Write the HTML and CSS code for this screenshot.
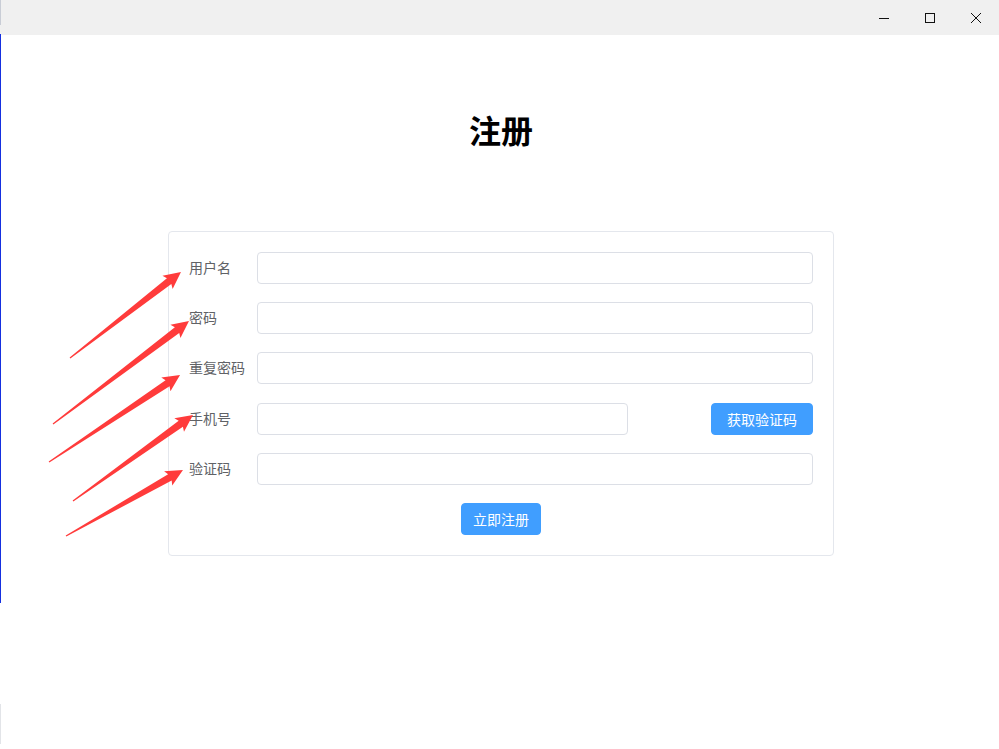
FILE: index.html
```html
<!DOCTYPE html>
<html lang="zh">
<head>
<meta charset="utf-8">
<title>注册</title>
<link rel="stylesheet" href="styles.css">
</head>
<body>
<div class="titlebar">
  <div class="ctrl">
    <svg width="12" height="12" viewBox="0 0 12 12"><path d="M1 6.5h10" stroke="#111" stroke-width="1"/></svg>
  </div>
  <div class="ctrl">
    <svg width="12" height="12" viewBox="0 0 12 12"><rect x="1.5" y="1.5" width="9" height="9" fill="none" stroke="#111" stroke-width="1"/></svg>
  </div>
  <div class="ctrl">
    <svg width="12" height="12" viewBox="0 0 12 12"><path d="M1 1L11 11M11 1L1 11" stroke="#111" stroke-width="1"/></svg>
  </div>
</div>
<div class="edge-top"></div>
<div class="edge-blue"></div>
<div class="edge-bottom"></div>

<main class="page">
  <h1 class="title">注册</h1>
  <div class="card">
    <div class="row">
      <label class="label">用户名</label>
      <div class="field"><div class="input"></div></div>
    </div>
    <div class="row">
      <label class="label">密码</label>
      <div class="field"><div class="input"></div></div>
    </div>
    <div class="row wide-gap">
      <label class="label">重复密码</label>
      <div class="field"><div class="input"></div></div>
    </div>
    <div class="row">
      <label class="label">手机号</label>
      <div class="field split">
        <div class="input phone"></div>
        <button class="btn code">获取验证码</button>
      </div>
    </div>
    <div class="row">
      <label class="label">验证码</label>
      <div class="field"><div class="input"></div></div>
    </div>
    <div class="row last center">
      <button class="btn submit">立即注册</button>
    </div>
  </div>
</main>

<svg class="arrows" width="999" height="749" viewBox="0 0 999 749">
  <g fill="#ff3b3b">
    <g transform="translate(70 358) rotate(-37.77)">
      <polygon points="0,-0.6 125.4,-3.6 123.4,-8.3 140.4,0 123.4,8.3 125.4,3.6 0,0.6"/>
    </g>
    <g transform="translate(53 424) rotate(-37.14)">
      <polygon points="0,-0.6 155.6,-3.6 153.6,-8.3 170.6,0 153.6,8.3 155.6,3.6 0,0.6"/>
    </g>
    <g transform="translate(49 462) rotate(-33.59)">
      <polygon points="0,-0.6 142.3,-3.6 140.3,-8.3 157.3,0 140.3,8.3 142.3,3.6 0,0.6"/>
    </g>
    <g transform="translate(73 501) rotate(-35.62)">
      <polygon points="0,-0.6 132.6,-3.6 130.6,-8.3 147.6,0 130.6,8.3 132.6,3.6 0,0.6"/>
    </g>
    <g transform="translate(66 536) rotate(-29.43)">
      <polygon points="0,-0.6 119.3,-3.6 117.3,-8.3 134.3,0 117.3,8.3 119.3,3.6 0,0.6"/>
    </g>
  </g>
</svg>
</body>
</html>
```

FILE: styles.css
```css
* { box-sizing: border-box; }

html, body {
  margin: 0;
  padding: 0;
  background: #ffffff;
  font-family: "Noto Sans CJK SC", "Liberation Sans", sans-serif;
  overflow: hidden;
}

body {
  width: 999px;
  height: 749px;
  position: relative;
}

.titlebar {
  height: 35px;
  background: #f0f0f0;
  display: flex;
  justify-content: flex-end;
}

.ctrl {
  width: 46px;
  height: 35px;
  display: flex;
  align-items: center;
  justify-content: center;
}

.edge-top {
  position: absolute;
  left: 0;
  top: 0;
  width: 1px;
  height: 25px;
  background: #c9cdd6;
}

.edge-blue {
  position: absolute;
  left: 0;
  top: 34px;
  width: 1px;
  height: 569px;
  background: #1530e0;
}

.edge-bottom {
  position: absolute;
  left: 0;
  top: 704px;
  width: 1px;
  height: 40px;
  background: #e2e4e8;
}

.page {
  padding: 70px 0 0 3px;
}

.title {
  margin: 0;
  text-align: center;
  font-size: 32px;
  line-height: 48px;
  font-weight: 700;
  color: #000;
}

.card {
  width: 666px;
  margin: 78px auto 0;
  border: 1px solid #e4e7ed;
  border-radius: 4px;
  padding: 20px;
  background: #fff;
}

.row {
  display: flex;
  margin-bottom: 18px;
}

.row.wide-gap {
  margin-bottom: 19px;
}

.row.last {
  margin-bottom: 0;
}

.row.center {
  justify-content: center;
}

.label {
  width: 68px;
  line-height: 31px;
  font-size: 14px;
  color: #606266;
}

.field {
  flex: 1;
}

.field.split {
  display: flex;
  justify-content: space-between;
}

.input {
  height: 32px;
  border: 1px solid #dcdfe6;
  border-radius: 4px;
  background: #fff;
}

.input.phone {
  width: 371px;
}

.btn {
  height: 32px;
  border: 1px solid #409eff;
  background: #409eff;
  color: #fff;
  border-radius: 4px;
  font-family: "Noto Sans CJK SC", "Liberation Sans", sans-serif;
  font-size: 14px;
  line-height: 30px;
  padding: 0;
  text-align: center;
}

.btn.code {
  width: 102px;
}

.btn.submit {
  width: 80px;
}

.arrows {
  position: absolute;
  left: 0;
  top: 0;
  pointer-events: none;
}
```
